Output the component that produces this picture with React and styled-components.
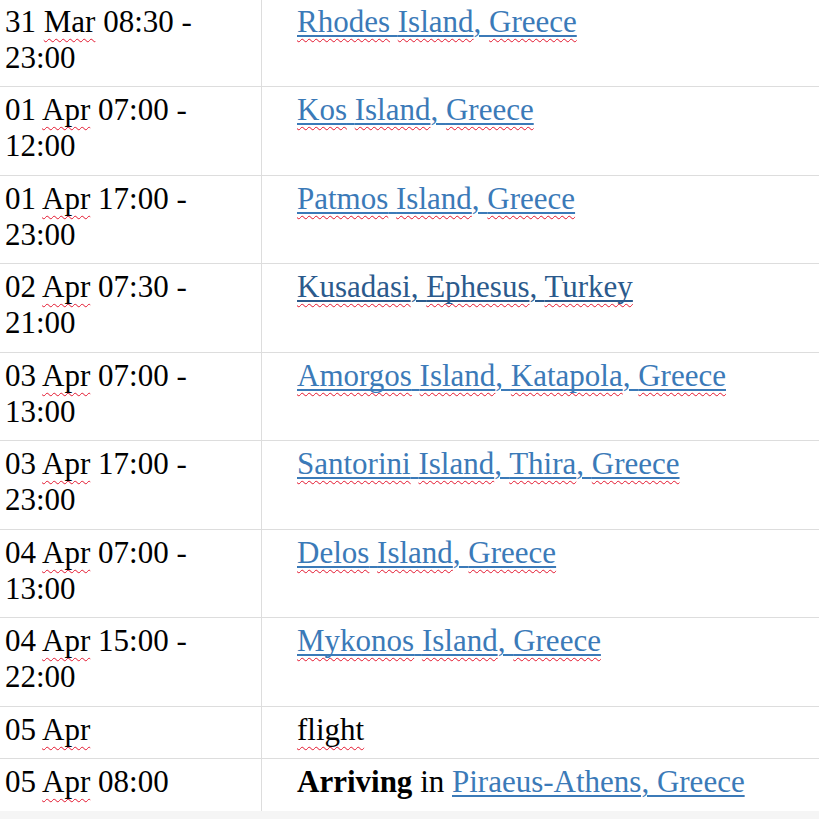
import React from "react";
import styled, { createGlobalStyle } from "styled-components";

const Global = createGlobalStyle`
  html, body { margin: 0; padding: 0; background: #f5f5f5; }
  body { font-family: "Liberation Serif", "Times New Roman", serif; color: #000; }
`;

const Table = styled.div`
  margin-top: -2px;
  background: #fff;
  font-size: 31px;
  line-height: 35.73px;
`;

const Row = styled.div`
  display: grid;
  grid-template-columns: 262px 1fr;
  border-top: 1px solid #dddddd;
`;

const DateCell = styled.div`
  padding: 5px 5px 11px 5px;
  border-right: 1px solid #dddddd;
`;

const PlaceCell = styled.div`
  padding: 5px 5px 11px 35px;
`;

const Link = styled.a`
  color: ${(p) => (p.$visited ? "#2b5a8c" : "#3b7ab8")};
  text-decoration: underline solid;
  text-decoration-thickness: 2px;
  text-underline-offset: 3px;
  cursor: pointer;
`;

const Misspelled = styled.span`
  text-decoration: underline wavy #e3162e;
  text-decoration-thickness: 1px;
  text-underline-offset: 6px;
  text-decoration-skip-ink: none;
`;

const Strong = styled.b`
  font-weight: 700;
`;

const rows = [
  { d: "31", m: "Mar", t: "08:30 - 23:00", place: ["Rhodes", "Island", "Greece"] },
  { d: "01", m: "Apr", t: "07:00 - 12:00", place: ["Kos", "Island", "Greece"] },
  { d: "01", m: "Apr", t: "17:00 - 23:00", place: ["Patmos", "Island", "Greece"] },
  { d: "02", m: "Apr", t: "07:30 - 21:00", place: ["Kusadasi", "Ephesus", "Turkey"], visited: true },
  { d: "03", m: "Apr", t: "07:00 - 13:00", place: ["Amorgos", "Island", "Katapola", "Greece"] },
  { d: "03", m: "Apr", t: "17:00 - 23:00", place: ["Santorini", "Island", "Thira", "Greece"] },
  { d: "04", m: "Apr", t: "07:00 - 13:00", place: ["Delos", "Island", "Greece"] },
  { d: "04", m: "Apr", t: "15:00 - 22:00", place: ["Mykonos", "Island", "Greece"] },
];

function buildPlace(words) {
  const out = [];
  words.forEach((w, i) => {
    if (i > 0) out.push({ sep: w === "Island" ? " " : ", " });
    out.push({ word: w });
  });
  return out;
}

function PlaceLink({ words, visited }) {
  return (
    <Link $visited={visited}>
      {buildPlace(words).map((tok, i) =>
        tok.word ? (
          <Misspelled key={i}>{tok.word}</Misspelled>
        ) : (
          <React.Fragment key={i}>{tok.sep}</React.Fragment>
        )
      )}
    </Link>
  );
}

export default function App() {
  return (
    <>
      <Global />
      <Table>
        {rows.map((r, i) => (
          <Row key={i}>
            <DateCell>
              {r.d} <Misspelled>{r.m}</Misspelled> {r.t}
            </DateCell>
            <PlaceCell>
              <PlaceLink words={r.place} visited={r.visited} />
            </PlaceCell>
          </Row>
        ))}
        <Row>
          <DateCell>
            05 <Misspelled>Apr</Misspelled>
          </DateCell>
          <PlaceCell>
            <Misspelled>flight</Misspelled>
          </PlaceCell>
        </Row>
        <Row>
          <DateCell>
            05 <Misspelled>Apr</Misspelled> 08:00
          </DateCell>
          <PlaceCell>
            <Strong>Arriving</Strong> in <Link>Piraeus-Athens, Greece</Link>
          </PlaceCell>
        </Row>
      </Table>
    </>
  );
}
